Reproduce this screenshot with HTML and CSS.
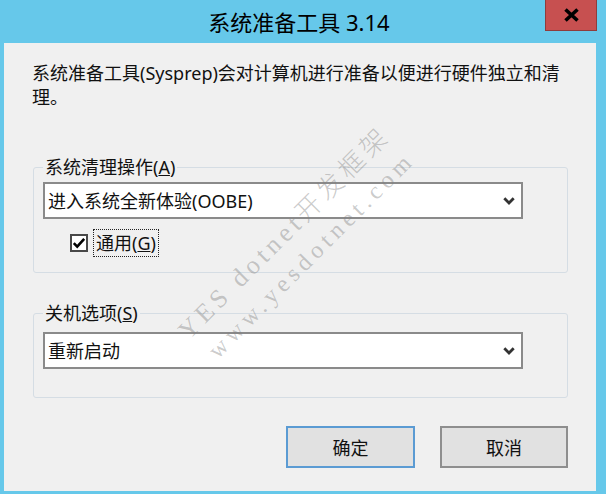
FILE: index.html
```html
<!DOCTYPE html>
<html lang="zh-CN">
<head>
<meta charset="utf-8">
<title>系统准备工具 3.14</title>
<link rel="stylesheet" href="styles.css">
</head>
<body>
<div class="window">
  <div class="titlebar">
    <div class="title">系统准备工具 3.14</div>
    <div class="close">
      <svg width="17" height="14" viewBox="0 0 17 14"><path d="M2.5 1.5 L14.5 12.5 M14.5 1.5 L2.5 12.5" stroke="#000" stroke-width="3.6" fill="none"/></svg>
    </div>
  </div>
  <div class="client">
    <p class="desc">系统准备工具(Sysprep)会对计算机进行准备以便进行硬件独立和清理。</p>
    <fieldset class="group g1">
      <legend>系统清理操作(<u>A</u>)</legend>
      <div class="combo">
        <span>进入系统全新体验(OOBE)</span>
        <svg class="chev" width="12" height="8" viewBox="0 0 12 8"><path d="M1.3 1.3 L6 6 L10.7 1.3" stroke="#333" stroke-width="2.8" fill="none"/></svg>
      </div>
      <div class="check-row">
        <span class="checkbox"><svg width="14" height="14" viewBox="0 0 14 14"><path d="M1.8 7.2 L5.2 10.6 L12.2 2.8" stroke="#000" stroke-width="2.6" fill="none"/></svg></span>
        <span class="focus">通用(<u>G</u>)</span>
      </div>
    </fieldset>
    <fieldset class="group g2">
      <legend>关机选项(<u>S</u>)</legend>
      <div class="combo">
        <span>重新启动</span>
        <svg class="chev" width="12" height="8" viewBox="0 0 12 8"><path d="M1.3 1.3 L6 6 L10.7 1.3" stroke="#333" stroke-width="2.8" fill="none"/></svg>
      </div>
    </fieldset>
    <div class="buttons">
      <div class="btn default">确定</div>
      <div class="btn">取消</div>
    </div>
    <div class="watermark wm1">YES dotnet开发框架</div>
    <div class="watermark wm2">www.yesdotnet.com</div>
  </div>
</div>
</body>
</html>
```

FILE: styles.css
```css
* { box-sizing: border-box; }
html, body { margin: 0; padding: 0; }
body {
  width: 606px;
  height: 494px;
  overflow: hidden;
  background: #66c8ea;
  font-family: "Noto Sans", "Noto Sans CJK SC", sans-serif;
  color: #000;
}
.window {
  width: 606px;
  height: 494px;
  background: #66c8ea;
  display: flex;
  flex-direction: column;
}
.titlebar {
  flex: none;
  height: 43px;
  display: grid;
  grid-template-columns: 1fr auto 1fr;
  padding: 0 9px;
}
.title {
  grid-column: 2;
  align-self: center;
  font-size: 22px;
  line-height: 30px;
  margin-top: 1px;
  margin-right: 8px;
  white-space: nowrap;
}
.close {
  grid-column: 3;
  justify-self: end;
  align-self: start;
  width: 52px;
  height: 31px;
  background: #c75050;
  border: 1px solid #8f3c3c;
  border-top: none;
  display: flex;
  align-items: center;
  justify-content: center;
}
.client {
  position: relative;
  flex: none;
  margin-left: 4px;
  width: 592px;
  height: 448px;
  background: #f0f0f0;
  padding: 18px 24px 0 28px;
}
.desc {
  margin: 0;
  font-size: 18px;
  line-height: 24px;
  color: #111;
}
.group {
  margin: 46px 0 0 1px;
  width: 535px;
  min-inline-size: 0;
  border: 1px solid #d5dde4;
  border-radius: 3px;
  padding: 3px 44px 15px 9px;
}
.group legend {
  padding: 0 2px;
  font-size: 18px;
  line-height: 24px;
  height: 24px;
  color: #111;
}
.g2 {
  margin-top: 28px;
  padding-top: 7px;
  padding-bottom: 28px;
}
.combo {
  height: 37px;
  border: 2px solid #8a8a8a;
  background: #fff;
  display: flex;
  align-items: center;
  justify-content: space-between;
  padding: 0 6px 0 3px;
  font-size: 18px;
  line-height: 24px;
  color: #111;
}
.check-row {
  display: flex;
  align-items: center;
  height: 28px;
  margin: 10px 0 0 27px;
}
.checkbox {
  width: 18px;
  height: 18px;
  border: 2px solid #484848;
  background: #fff;
  display: flex;
  align-items: center;
  justify-content: center;
}
.focus {
  margin-left: 5px;
  height: 28px;
  border: 1px dotted #222;
  padding: 0 2px;
  font-size: 18px;
  line-height: 26px;
  color: #111;
}
.buttons {
  display: flex;
  justify-content: flex-end;
  gap: 25px;
  width: 535px;
  margin: 28px 0 0 1px;
}
.btn {
  width: 128px;
  height: 42px;
  background: #e1e1e1;
  border: 2px solid #8e8e8e;
  display: flex;
  align-items: center;
  justify-content: center;
  font-size: 18px;
  color: #111;
}
.btn.default { width: 129px; border-color: #5b9bd3; }
.watermark {
  position: absolute;
  pointer-events: none;
  white-space: nowrap;
  font-family: "Liberation Serif", "Noto Sans CJK SC", serif;
  font-weight: 300;
  line-height: 1;
  color: rgba(130, 130, 130, 0.42);
  transform-origin: 0 50%;
  transform: rotate(-45deg);
  z-index: 2;
}
.wm1 {
  left: 179px;
  top: 279px;
  font-size: 26px;
  letter-spacing: 4.5px;
}
.wm2 {
  left: 208px;
  top: 299px;
  font-size: 24px;
  letter-spacing: 5px;
}
```
